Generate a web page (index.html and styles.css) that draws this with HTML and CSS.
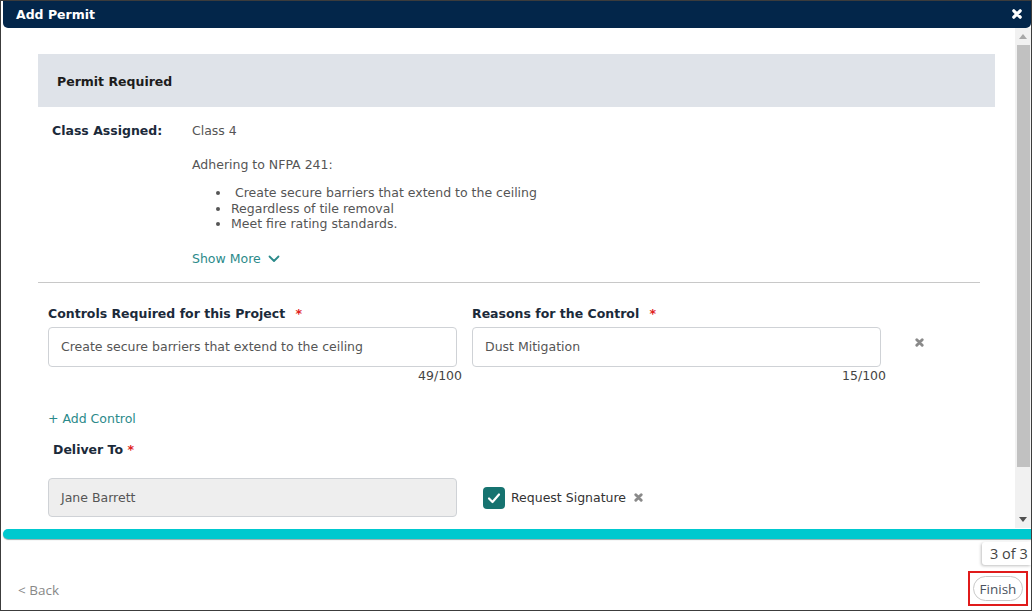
FILE: index.html
```html
<!DOCTYPE html>
<html lang="en">

<head>
    <meta charset="UTF-8">
    <meta name="viewport" content="width=device-width, initial-scale=1.0">
    <title>Add Permit</title>
    <link rel="stylesheet" href="styles.css">
</head>

<body>
    <div class="dialog">
        <div class="dialog-header">
            <span class="dialog-title">Add Permit</span>
            <span class="close-btn">
                <svg width="10" height="10" viewBox="0 0 10 10"><path d="M1.8 1.8 L8.2 8.2 M8.2 1.8 L1.8 8.2" stroke="#fff" stroke-width="3.2" stroke-linecap="round"/></svg>
            </span>
        </div>

        <div class="dialog-body">
            <div class="content">
                <div class="section-head">Permit Required</div>

                <div class="class-info">
                    <div class="info-label">Class Assigned:</div>
                    <div class="info-value">
                        <p>Class 4</p>
                        <p class="adhering">Adhering to NFPA 241:</p>
                        <ul class="rules">
                            <li>&nbsp;Create secure barriers that extend to the ceiling</li>
                            <li>Regardless of tile removal</li>
                            <li>Meet fire rating standards.</li>
                        </ul>
                        <a class="show-more">Show More
                            <svg width="12" height="8" viewBox="0 0 12 8"><path d="M1.5 1.5 L6 6 L10.5 1.5" fill="none" stroke="#2b8a8a" stroke-width="1.8" stroke-linecap="round" stroke-linejoin="round"/></svg>
                        </a>
                    </div>
                </div>

                <div class="divider"></div>

                <div class="control-row">
                    <div class="field">
                        <div class="field-label">Controls Required for this Project <span class="req">*</span></div>
                        <div class="text-input">Create secure barriers that extend to the ceiling</div>
                        <div class="counter">49/100</div>
                    </div>
                    <div class="field">
                        <div class="field-label">Reasons for the Control <span class="req">*</span></div>
                        <div class="text-input">Dust Mitigation</div>
                        <div class="counter">15/100</div>
                    </div>
                    <span class="remove remove-control">
                        <svg width="9" height="9" viewBox="0 0 10 10"><path d="M2 2 L8 8 M8 2 L2 8" stroke="#8a8a8a" stroke-width="3.2" stroke-linecap="round"/></svg>
                    </span>
                </div>

                <a class="add-control">+ Add Control</a>

                <div class="deliver-label">Deliver To <span class="req-tight">*</span></div>
                <div class="deliver-row">
                    <div class="text-input disabled">Jane Barrett</div>
                    <div class="signature">
                        <span class="checkbox">
                            <svg width="14" height="12" viewBox="0 0 14 12"><path d="M2 6.5 L5.5 10 L12 2.5" fill="none" stroke="#fff" stroke-width="2.2" stroke-linecap="round" stroke-linejoin="round"/></svg>
                        </span>
                        <span class="signature-text">Request Signature</span>
                        <span class="remove">
                            <svg width="9" height="9" viewBox="0 0 10 10"><path d="M2 2 L8 8 M8 2 L2 8" stroke="#8a8a8a" stroke-width="3.2" stroke-linecap="round"/></svg>
                        </span>
                    </div>
                </div>
            </div>

            <!-- fake scrollbar -->
            <div class="scrollbar">
                <svg class="arrow" width="8" height="5" viewBox="0 0 8 5"><path d="M0 5 L4 0 L8 5 Z" fill="#a8a8a8"/></svg>
                <div class="thumb"></div>
                <svg class="arrow" width="8" height="5" viewBox="0 0 8 5"><path d="M0 0 L4 5 L8 0 Z" fill="#505050"/></svg>
            </div>
        </div>

        <div class="progress"></div>

        <div class="footer">
            <div class="step-row">
                <div class="step-box">3 of 3</div>
            </div>
            <div class="nav-row">
                <a class="back-link">&lt; Back</a>
                <div class="finish-mark">
                    <button class="finish-btn">Finish</button>
                </div>
            </div>
        </div>
    </div>
</body>

</html>
```

FILE: styles.css
```css
* {
    margin: 0;
    padding: 0;
    box-sizing: border-box;
}

body {
    background: #fff;
    font-family: "DejaVu Sans", Verdana, sans-serif;
    font-size: 12.5px;
    color: #555;
}

.dialog {
    width: 1032px;
    height: 611px;
    border: 1px solid #3c3c3c;
    padding-left: 2px;
    display: flex;
    flex-direction: column;
    overflow: hidden;
    background: #fff;
}

/* -------- HEADER -------- */
.dialog-header {
    height: 27px;
    background-color: #03264a;
    border-radius: 0 0 5px 5px;
    display: flex;
    align-items: center;
    justify-content: space-between;
    padding: 0 9px 0 13px;
    flex-shrink: 0;
}

.dialog-title {
    color: #fff;
    font-weight: bold;
    font-size: 12.5px;
}

.close-btn {
    display: flex;
    margin-top: -2px;
}

/* -------- BODY -------- */
.dialog-body {
    height: 500px;
    display: flex;
    flex-shrink: 0;
}

.content {
    flex: 1;
    padding: 26px 20px 0 35px;
    overflow: hidden;
}

.section-head {
    height: 53px;
    background-color: #dfe3e9;
    display: flex;
    align-items: center;
    padding: 1px 0 0 19px;
    font-weight: bold;
    color: #1c1c1c;
}

.class-info {
    display: flex;
    margin-top: 16px;
    padding-left: 14px;
    line-height: 16px;
}

.info-label {
    width: 140px;
    font-weight: bold;
    color: #1b2a3a;
}

.adhering {
    margin-top: 18px;
}

.rules {
    margin-top: 12px;
    padding-left: 39px;
    line-height: 15.5px;
}

.show-more {
    display: inline-flex;
    align-items: center;
    gap: 7px;
    margin-top: 19px;
    color: #2b8a8a;
    cursor: pointer;
}

.divider {
    height: 1px;
    background-color: #c8c8c8;
    margin: 15px 15px 0 0;
}

/* -------- CONTROLS -------- */
.control-row {
    display: flex;
    align-items: flex-start;
    gap: 15px;
    margin-top: 23px;
    padding-left: 10px;
}

.field {
    width: 409px;
}

.field-label {
    font-weight: bold;
    color: #1b2a3a;
    line-height: 16px;
}

.req {
    color: #e02020;
    margin-left: 6px;
}

.req-tight {
    color: #e02020;
}

.text-input {
    height: 40px;
    margin-top: 5px;
    border: 1px solid #cfd2d6;
    border-radius: 4px;
    display: flex;
    align-items: center;
    padding-left: 12px;
    color: #555;
}

.counter {
    text-align: right;
    margin-right: -5px;
    margin-top: 1px;
    line-height: 16px;
    color: #444;
}

.remove {
    display: flex;
}

.remove-control {
    margin-left: 19px;
    margin-top: 32px;
}

.add-control {
    display: block;
    margin-top: 27px;
    padding-left: 10px;
    line-height: 16px;
    color: #2b8a8a;
    cursor: pointer;
}

.deliver-label {
    margin-top: 15px;
    padding-left: 15px;
    line-height: 16px;
    font-weight: bold;
    color: #1b2a3a;
}

.deliver-row {
    display: flex;
    align-items: center;
    margin-top: 20px;
    padding-left: 10px;
}

.deliver-row .text-input {
    width: 409px;
    height: 39px;
    margin-top: 0;
    padding-top: 1px;
}

.text-input.disabled {
    background-color: #eeeeee;
}

.signature {
    display: flex;
    align-items: center;
    margin-left: 26px;
    padding-top: 1px;
}

.checkbox {
    width: 22px;
    height: 22px;
    background-color: #167370;
    border-radius: 4px;
    display: flex;
    align-items: center;
    justify-content: center;
}

.signature-text {
    margin-left: 6px;
    color: #333;
}

.signature .remove {
    margin-left: 8px;
}

/* -------- SCROLLBAR -------- */
.scrollbar {
    width: 16px;
    background-color: #f1f1f1;
    display: flex;
    flex-direction: column;
    align-items: center;
    padding: 6px 0;
}

.arrow {
    flex-shrink: 0;
}

.thumb {
    width: 13px;
    height: 422px;
    background-color: #c1c1c1;
    margin: 6px 0 0 1px;
}

.scrollbar .arrow:last-child {
    margin-top: auto;
}

/* -------- FOOTER -------- */
.progress {
    height: 10px;
    margin-top: 1px;
    margin-right: -6px;
    background-color: #00c9cf;
    border-radius: 5px;
    box-shadow: 0 1px 1px #9aa;
    flex-shrink: 0;
}

.footer {
    flex: 1;
    display: flex;
    flex-direction: column;
    font-family: "Open Sans", sans-serif;
}

.step-row {
    display: flex;
    justify-content: flex-end;
    margin-top: 3px;
}

.step-box {
    width: 49px;
    height: 23px;
    padding-left: 8px;
    background: #fff;
    box-shadow: -1px 1px 3px rgba(0, 0, 0, 0.25);
    border-radius: 3px 0 0 3px;
    font-size: 14.5px;
    line-height: 23px;
    color: #444;
    white-space: nowrap;
}

.nav-row {
    display: flex;
    justify-content: space-between;
    align-items: center;
    margin-top: 6px;
    padding: 0 3px 0 15px;
}

.back-link {
    color: #888;
    font-size: 13.5px;
    margin-top: 2px;
}

.finish-mark {
    border: 2px solid #e01b1b;
    padding: 3px;
}

.finish-btn {
    width: 50px;
    height: 25px;
    border: 1px solid #c9c9c9;
    border-radius: 13px;
    background: #fff;
    font-family: "Open Sans", sans-serif;
    font-size: 13.5px;
    color: #4a5260;
}
```
